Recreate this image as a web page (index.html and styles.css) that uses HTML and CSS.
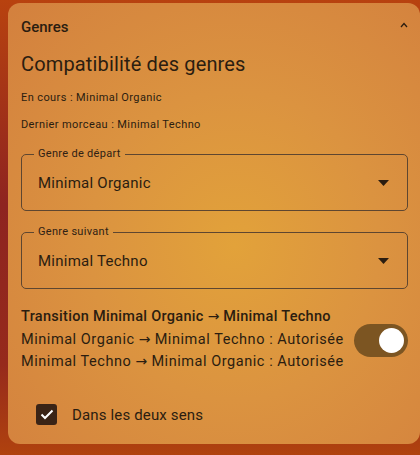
FILE: index.html
```html
<!DOCTYPE html>
<html lang="fr">
<head>
    <meta charset="UTF-8">
    <title>Genres</title>
    <link rel="stylesheet" href="styles.css">
</head>
<body>
    <div class="card">
        <div class="card-header">
            <span class="card-header-title">Genres</span>
            <svg class="collapse-icon" width="8" height="6" viewBox="0 0 8 6">
                <path d="M1 5 L4 1.5 L7 5" fill="none" stroke="#2b1d10" stroke-width="1.3"/>
            </svg>
        </div>

        <h2 class="section-title">Compatibilité des genres</h2>
        <p class="info">En cours : Minimal Organic</p>
        <p class="info info-last">Dernier morceau : Minimal Techno</p>

        <!-- Sélecteurs -->
        <fieldset class="select-field">
            <legend>Genre de départ</legend>
            <div class="select-value">
                <span>Minimal Organic</span>
                <svg width="11" height="6" viewBox="0 0 11 6"><path d="M0 0 H11 L5.5 6 Z" fill="#2b1d10"/></svg>
            </div>
        </fieldset>

        <fieldset class="select-field">
            <legend>Genre suivant</legend>
            <div class="select-value">
                <span>Minimal Techno</span>
                <svg width="11" height="6" viewBox="0 0 11 6"><path d="M0 0 H11 L5.5 6 Z" fill="#2b1d10"/></svg>
            </div>
        </fieldset>

        <!-- Transition -->
        <div class="transition">
            <div class="transition-text">
                <div class="transition-title">Transition Minimal Organic <span class="arrow">→</span> Minimal Techno</div>
                <div>Minimal Organic <span class="arrow">→</span> Minimal Techno : Autorisée</div>
                <div>Minimal Techno <span class="arrow">→</span> Minimal Organic : Autorisée</div>
            </div>
            <div class="toggle"><div class="toggle-thumb"></div></div>
        </div>

        <label class="check-row">
            <span class="checkbox">
                <svg width="14" height="11" viewBox="0 0 14 11"><path d="M1.5 5.5 L5 9 L12.5 1.5" fill="none" stroke="#fff" stroke-width="2"/></svg>
            </span>
            Dans les deux sens
        </label>
    </div>
</body>
</html>
```

FILE: styles.css
```css
* {
    box-sizing: border-box;
    margin: 0;
    padding: 0;
}
body {
    font-family: Roboto, "Noto Sans", Arial, sans-serif;
    color: #2b1d10;
    height: 455px;
    overflow: hidden;
    background: linear-gradient(180deg, #b8420f 0%, #8e2420 45%, #962a1c 80%, #b0420e 100%);
    padding: 3px 0 0 8px;
}
.card {
    border-radius: 12px;
    padding: 14px 12px 9px 13px;
    background: radial-gradient(ellipse at 55% 55%, #e2a23a 0%, #db9340 45%, #d3803e 100%);
}
.card-header {
    display: flex;
    justify-content: space-between;
    align-items: center;
    height: 20px;
}
.card-header-title {
    font-size: 15px;
    font-weight: 500;
}
.collapse-icon {
    margin-right: 0;
    margin-top: -4px;
}
.section-title {
    font-size: 20px;
    font-weight: 400;
    line-height: 26px;
    letter-spacing: 0.15px;
    margin-top: 14px;
}
.info {
    font-size: 11px;
    line-height: 16px;
    letter-spacing: 0.4px;
    margin-top: 13px;
}
.info-last {
    margin-top: 11px;
}
.select-field {
    border: 1px solid #5e4630;
    border-radius: 5px;
    padding: 12px 18px 17px 12px;
    margin-top: 14px;
}
.select-field legend {
    font-size: 11px;
    line-height: 14px;
    letter-spacing: 0.3px;
    padding: 0 4px;
    color: #2f2114;
}
.select-value {
    display: flex;
    justify-content: space-between;
    align-items: center;
    padding-left: 4px;
    font-size: 15px;
    line-height: 20px;
    letter-spacing: 0.25px;
}
.transition {
    display: flex;
    align-items: center;
    justify-content: space-between;
    margin-top: 17px;
    font-size: 14.5px;
    line-height: 22.5px;
    letter-spacing: 0.55px;
}
.transition-title {
    font-weight: 500;
    letter-spacing: 0.3px;
}
.arrow {
    font-family: "DejaVu Sans", sans-serif;
    font-size: 14px;
    font-weight: 400;
    letter-spacing: 0;
    line-height: 1;
}
.toggle {
    width: 54px;
    height: 33px;
    border-radius: 17px;
    background: #7c5522;
    display: flex;
    align-items: center;
    justify-content: flex-end;
    padding-right: 4px;
    margin-top: 2px;
}
.toggle-thumb {
    width: 25px;
    height: 25px;
    border-radius: 50%;
    background: #fff;
}
.check-row {
    display: flex;
    align-items: center;
    gap: 15px;
    height: 40px;
    margin-top: 21px;
    padding-left: 15px;
    font-size: 15px;
    letter-spacing: 0.15px;
}
.checkbox {
    width: 21px;
    height: 21px;
    border-radius: 3px;
    background: #3a2416;
    display: flex;
    align-items: center;
    justify-content: center;
}
```
